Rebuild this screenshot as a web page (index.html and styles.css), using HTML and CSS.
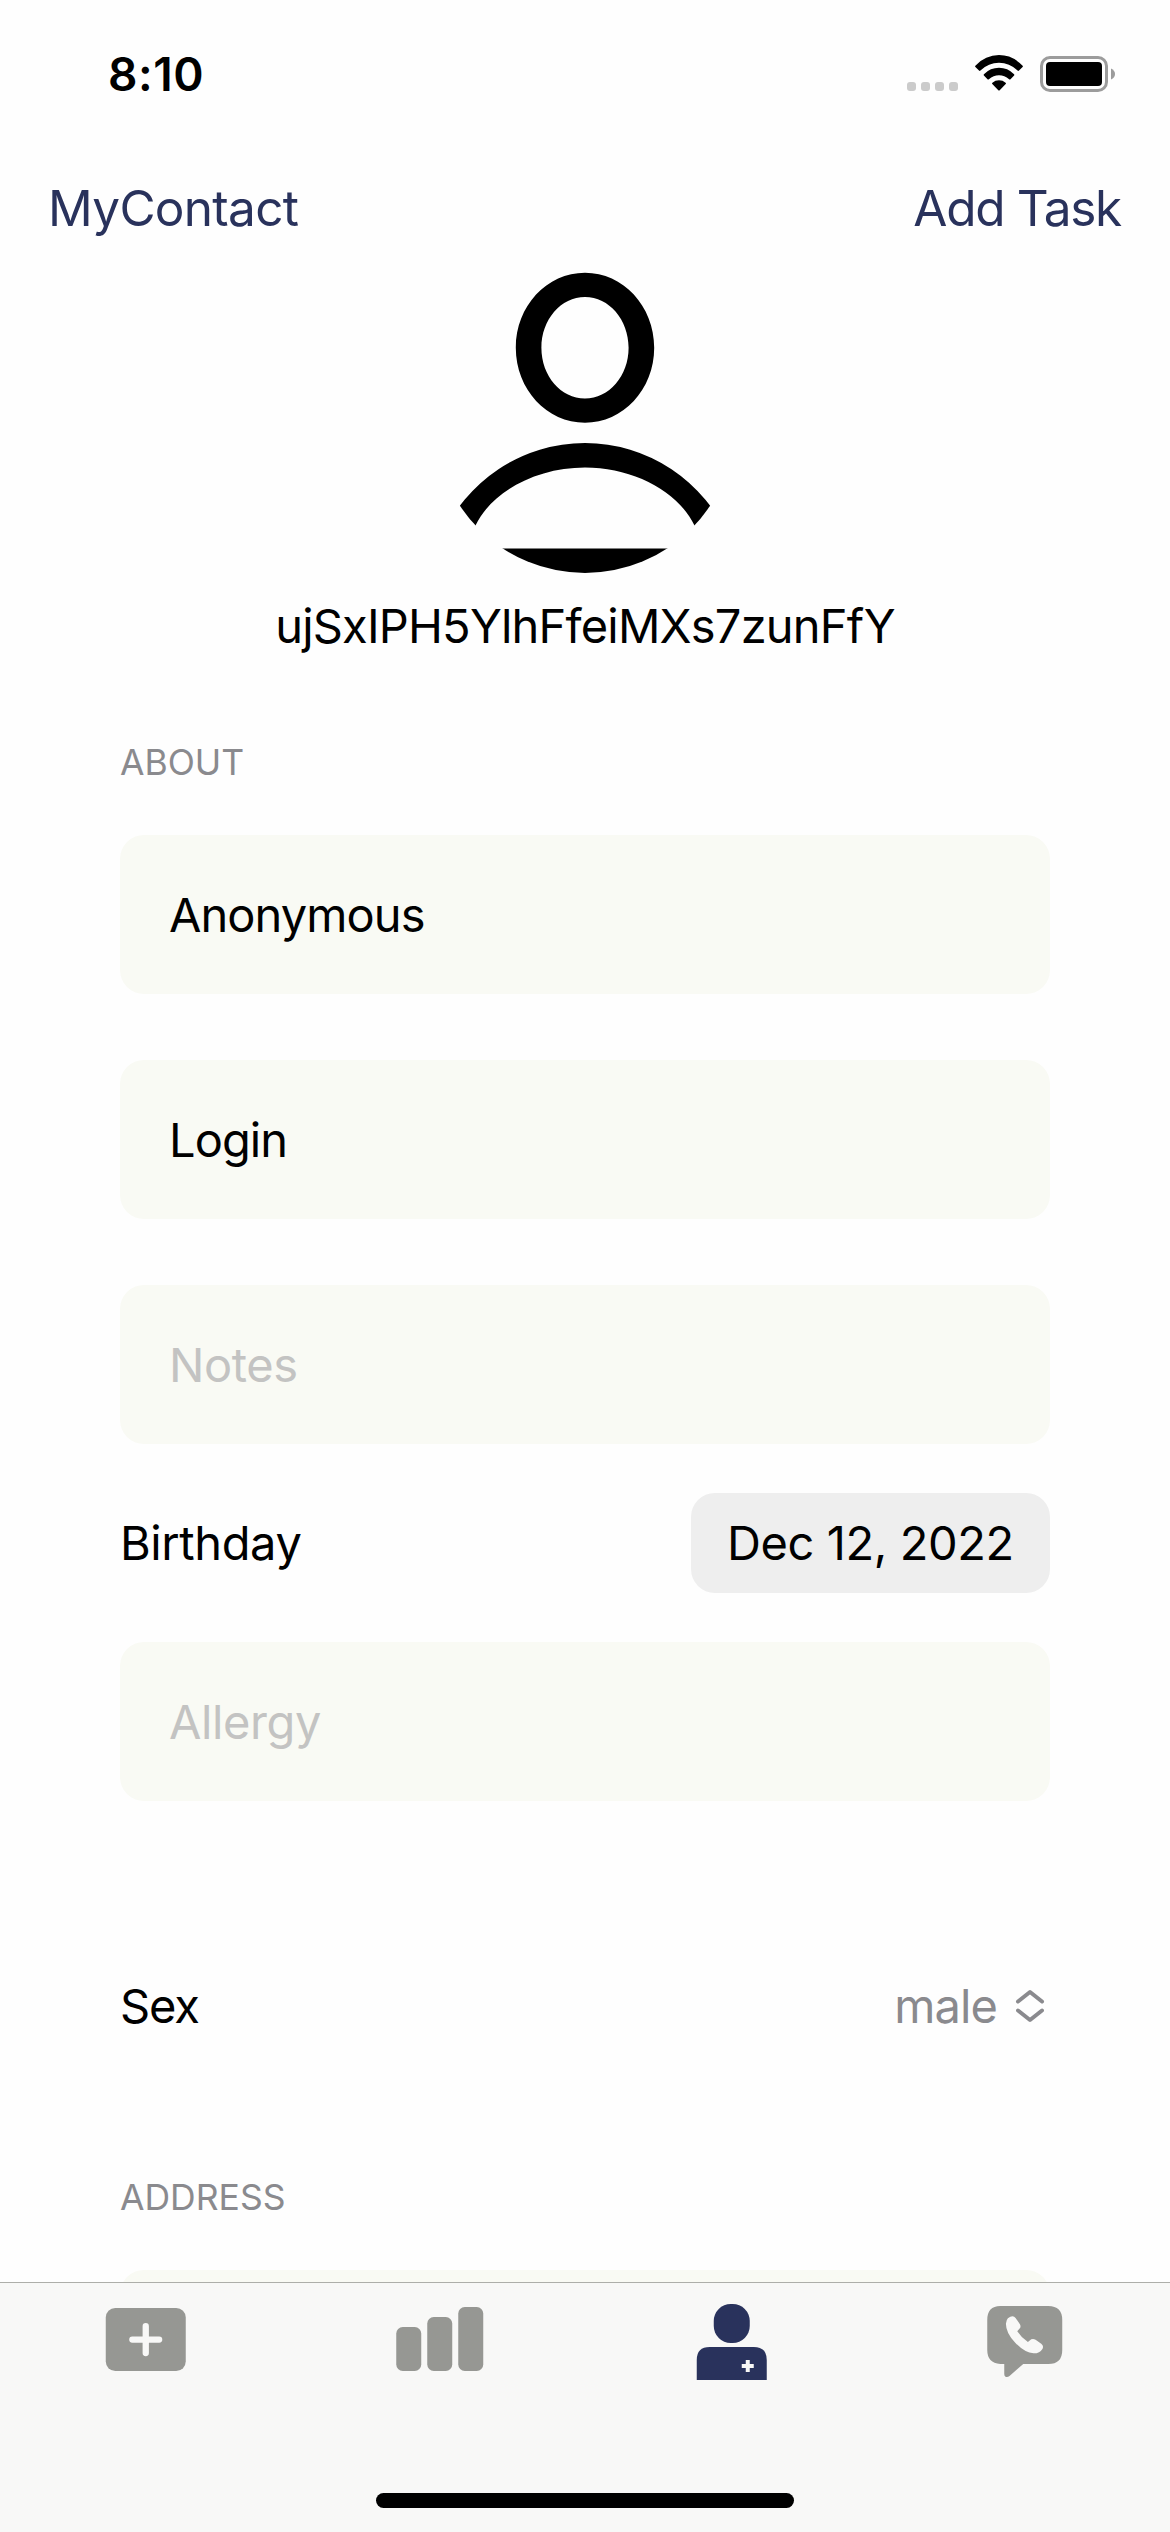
FILE: index.html
```html
<!DOCTYPE html>
<html lang="en">
<head>
<meta charset="utf-8">
<title>MyContact</title>
<link rel="stylesheet" href="styles.css">
</head>
<body>
<div class="screen">
  <header class="status">
    <span class="status-time">8:10</span>
    <div class="status-icons">
      <svg class="signal" viewBox="0 0 51 36" width="51" height="36" aria-hidden="true">
        <rect x="0" y="26" width="9" height="9" rx="3"/>
        <rect x="14" y="26" width="9" height="9" rx="3"/>
        <rect x="28" y="26" width="9" height="9" rx="3"/>
        <rect x="42" y="26" width="9" height="9" rx="3"/>
      </svg>
      <svg class="wifi" viewBox="0 0 48 36" width="48" height="36" aria-hidden="true">
        <path d="M.4 9.7Q10.500-.9 24-.9T47.600 9.700Q48.200 10.400 47.600 11L44 14.600Q43.300 15.200 42.600 14.600Q34.500 6.800 24 6.800T5.400 14.600Q4.700 15.200 4 14.600L.4 11Q-.2 10.400.4 9.700Z"/>
        <path d="M8.900 18.200Q15.400 11.800 24 11.800T39.100 18.200Q39.700 18.900 39.100 19.500L35.500 23.200Q34.800 23.800 34.100 23.200Q29.600 19.300 24 19.300T13.900 23.200Q13.200 23.800 12.500 23.200L8.900 19.500Q8.300 18.900 8.900 18.200Z"/>
        <path d="M17.400 26.700Q20.200 24.300 24 24.300T30.600 26.700Q31.400 27.400 30.700 28.100L24.700 34.200Q24 34.900 23.300 34.200L17.300 28.100Q16.600 27.400 17.400 26.700Z"/>
      </svg>
      <svg class="battery" viewBox="0 0 76 36" width="76" height="36" aria-hidden="true">
        <rect x="1.500" y="1.500" width="65" height="33" rx="8.500" fill="none" stroke="#9c9c9c" stroke-width="3"/>
        <rect x="6" y="6" width="56" height="24" rx="4"/>
        <path d="M71 12.500Q75 14.500 75 18T71 23.500Z" fill="#9c9c9c"/>
      </svg>
    </div>
  </header>

  <nav class="navbar">
    <a class="nav-link nav-back">MyContact</a>
    <a class="nav-link nav-add">Add Task</a>
  </nav>

  <main class="content">
    <section class="profile">
      <svg class="avatar" viewBox="0 0 300 302" width="300" height="302" aria-hidden="true">
        <defs><clipPath id="disc"><circle cx="150" cy="151" r="150"/></clipPath></defs>
        <path fill-rule="evenodd" d="M150 .8C188 .8 219.200 34 219.200 75.800S188 150.800 150 150.800S80.800 117.600 80.800 75.800S112 .8 150 .8ZM150 25C126 25 106.400 47.500 106.400 75.800S126 126.600 150 126.600S193.600 104 193.600 75.800S174 25 150 25Z"/>
        <g clip-path="url(#disc)">
          <path d="M6 267A156 156 0 0 1 294 267L270 295A120 97.800 0 0 0 259.500 253.500C243 219 198 195.500 150 195.500S57 219 40.500 253.500L30 295Z"/>
          <rect x="0" y="276.500" width="300" height="26"/>
        </g>
      </svg>
      <p class="user-id">ujSxIPH5YlhFfeiMXs7zunFfY</p>
    </section>

    <section class="group">
      <h2 class="group-title">ABOUT</h2>
      <div class="field tight">Anonymous</div>
      <div class="field tight">Login</div>
      <div class="field placeholder">Notes</div>
      <div class="row birthday">
        <span>Birthday</span>
        <span class="date">Dec 12, 2022</span>
      </div>
      <div class="field placeholder">Allergy</div>
      <div class="row sex">
        <span class="tighter">Sex</span>
        <span class="picker tight">male
          <svg viewBox="0 0 32 36" width="32" height="36" aria-hidden="true">
            <path d="M4 13.500L16 4L28 13.500M4 22.500L16 32L28 22.500"/>
          </svg>
        </span>
      </div>
    </section>

    <section class="group">
      <h2 class="group-title">ADDRESS</h2>
      <div class="field"></div>
    </section>
  </main>

  <footer class="tabbar">
    <div class="tabs">
      <svg viewBox="0 0 90 90" aria-hidden="true">
        <rect x="4.750" y="8" width="80" height="63" rx="9.500"/>
        <path class="cut" d="M44.750 26.200V53M31.350 39.600H58.150"/>
      </svg>
      <svg viewBox="0 0 90 90" aria-hidden="true">
        <rect x="2.250" y="27" width="25" height="44" rx="6.500"/>
        <rect x="33.250" y="17" width="25" height="54" rx="6.500"/>
        <rect x="64.250" y="7" width="25" height="64" rx="6.500"/>
      </svg>
      <svg class="active" viewBox="0 0 90 90" aria-hidden="true">
        <rect x="27.750" y="4" width="36" height="39" rx="17"/>
        <path d="M10.750 80V60Q10.750 47 23.750 47H67.750Q80.750 47 80.750 60V80Z"/>
        <path class="hole" d="M59.750 60h4v4h4v4h-4v4h-4v-4h-4v-4h4Z"/>
      </svg>
      <svg viewBox="0 0 90 90" aria-hidden="true">
        <path d="M21.250 6H69.250Q83.250 6 83.250 20V50Q83.250 64 69.250 64H44.250L30.500 76Q28.500 77.500 26.500 76.700Q25.250 76.200 25.250 74V64H21.250Q8.250 63 8.250 50V20Q8.250 6 21.250 6Z"/>
        <path class="hole" transform="translate(-318.750 -30) scale(.33333)" d="M1043 145Q1058 133 1066 144L1079 163Q1082 168 1080 173L1071 184Q1083 203 1103 216L1113 208Q1119 205 1126 209L1143 221Q1151 227 1147 236Q1139 250 1120 250Q1094 248 1065 218Q1037 189 1037 161Q1038 150 1043 145Z"/>
      </svg>
    </div>
    <div class="home-indicator"></div>
  </footer>
</div>
</body>
</html>
```
FILE: styles.css
```css
* {
  box-sizing: border-box;
}

body {
  margin: 0;
  background: #fefefe;
  color: #000;
  font-family: Inter, "Liberation Sans", sans-serif;
  font-size: 47px;
  line-height: 60px;
  letter-spacing: -0.4px;
}

p,
h2 {
  margin: 0;
}

svg {
  display: block;
  overflow: visible;
}

.screen {
  display: flex;
  flex-direction: column;
  width: 1170px;
  height: 2532px;
  overflow: hidden;
}

/* Status bar */
.status {
  display: flex;
  align-items: center;
  justify-content: space-between;
  flex: none;
  height: 148px;
  padding: 0 54px 0 108px;
}

.status-time {
  font-size: 46px;
  font-weight: 600;
  letter-spacing: 0.6px;
}

.status-icons {
  display: flex;
}

.signal {
  fill: #cbcbcb;
}

.wifi {
  margin: 0 17px;
}

/* Navigation bar */
.navbar {
  display: flex;
  align-items: center;
  justify-content: space-between;
  flex: none;
  height: 120px;
  padding: 0 49px 0 48px;
}

.nav-link {
  color: #29325c;
  font-size: 49.5px;
}

.nav-back {
  letter-spacing: -0.7px;
}

.nav-add {
  letter-spacing: -1.3px;
}

/* Scrolling form */
.content {
  flex: 1;
  min-height: 0;
  overflow: hidden;
}

.profile {
  display: flex;
  flex-direction: column;
  align-items: center;
  gap: 22px;
  padding-top: 4px;
}

.user-id {
  letter-spacing: -0.8px;
}

.group {
  padding: 0 120px;
}

.group-title {
  padding: 77px 0 42px;
  color: #8a8a8e;
  font-size: 35.5px;
  font-weight: 400;
  letter-spacing: 0;
}

.field {
  height: 159px;
  margin-bottom: 66px;
  padding: 0 49px;
  border-radius: 24px;
  background: #f9faf4;
  line-height: 159px;
}

.placeholder {
  margin-bottom: 0;
  color: #c3c3c2;
}

.tight {
  letter-spacing: -0.92px;
}

.tighter {
  letter-spacing: -1.1px;
}

.row {
  display: flex;
  align-items: center;
  justify-content: space-between;
}

.birthday {
  height: 198px;
}

.date {
  width: 359px;
  height: 100px;
  padding-left: 36px;
  border-radius: 24px;
  background: #eee;
  line-height: 100px;
}

.sex {
  height: 151px;
  margin-top: 129px;
}

.picker {
  display: flex;
  align-items: center;
  gap: 17px;
  padding-right: 4px;
  color: #8a8a8e;
}

.picker svg {
  fill: none;
  stroke: #8a8a8e;
  stroke-width: 4;
  stroke-linecap: round;
  stroke-linejoin: round;
}

.group + .group .group-title {
  padding-top: 87px;
}

/* Tab bar */
.tabbar {
  display: flex;
  flex-direction: column;
  align-items: center;
  justify-content: space-between;
  flex: none;
  height: 250px;
  padding: 17px 0 24px;
  border-top: 1px solid #adaea9;
  background: #f8f8f7;
}

.tabs {
  display: grid;
  grid-template-columns: repeat(4, 1fr);
  justify-items: center;
  width: 100%;
}

.tabs svg {
  width: 90px;
  height: 90px;
  fill: #969793;
}

.tabs .active {
  fill: #29325c;
}

.tabs .cut {
  stroke: #f8f8f7;
  stroke-width: 6.3;
  stroke-linecap: round;
}

.tabs .hole {
  fill: #f8f8f7;
}

.home-indicator {
  width: 418px;
  height: 15px;
  border-radius: 8px;
  background: #000;
}
```
